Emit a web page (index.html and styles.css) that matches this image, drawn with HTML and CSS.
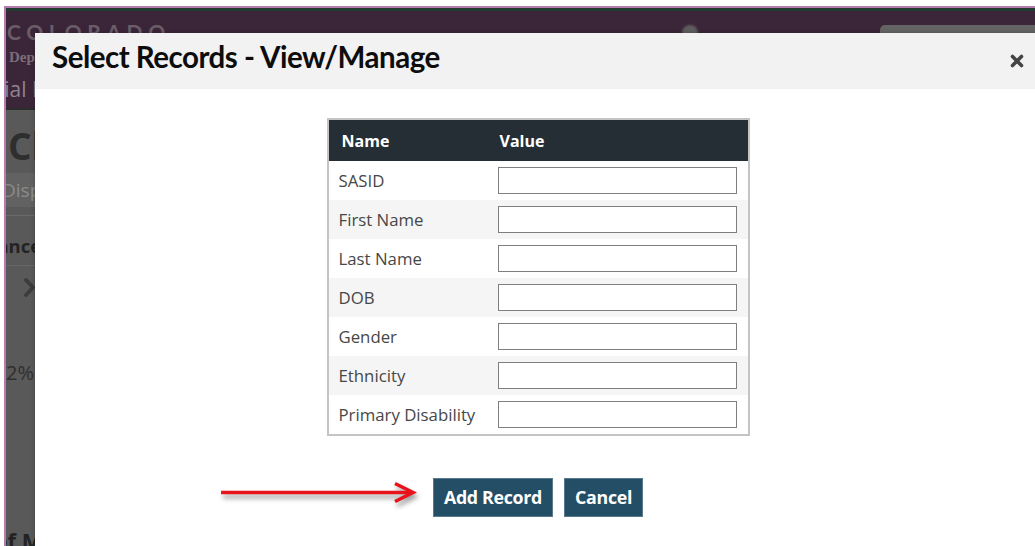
FILE: index.html
```html
<!DOCTYPE html>
<html lang="en">
<head>
<meta charset="utf-8">
<title>Select Records - View/Manage</title>
<link rel="stylesheet" href="styles.css">
</head>
<body>
<div class="frame">
  <header class="site-header">
    <div class="header-top">
      <div class="brand">
        <div class="brand-name">COLORADO</div>
        <div class="brand-dept">Department of Education</div>
      </div>
      <div class="header-tools">
        <span class="user-icon"></span>
        <span class="search-box"></span>
      </div>
    </div>
    <div class="app-title"><span class="app-title-text">Special Education</span></div>
  </header>
  <main class="content">
    <h1 class="page-title">Child Records</h1>
    <div class="tab-bar"><span class="tab">Display</span></div>
    <section class="summary">
      <h2 class="summary-title">Compliance</h2>
      <div class="summary-toggle">
        <svg width="13" height="21" viewBox="0 0 13 21"><path d="M3 3 L10 10.5 L3 18" fill="none" stroke="#3c3c3c" stroke-width="4" stroke-linecap="round" stroke-linejoin="round"/></svg>
      </div>
      <div class="summary-stat">2%</div>
    </section>
    <div class="summary-foot">of Measures</div>
  </main>
</div>

<div class="modal" role="dialog" aria-labelledby="modal-title">
  <div class="modal-header">
    <h3 class="modal-title" id="modal-title">Select Records - View/Manage</h3>
    <button class="modal-close" type="button" aria-label="Close">
      <svg width="14" height="14" viewBox="0 0 14 14"><path d="M2.5 2.5 L11.5 11.5 M11.5 2.5 L2.5 11.5" stroke="#444" stroke-width="3.6" stroke-linecap="round"/></svg>
    </button>
  </div>
  <div class="modal-body">
    <table class="record-table">
      <thead>
        <tr><th class="col-name">Name</th><th class="col-value">Value</th></tr>
      </thead>
      <tbody>
        <tr><td class="col-name">SASID</td><td class="col-value"><input class="field" type="text"></td></tr>
        <tr><td class="col-name">First Name</td><td class="col-value"><input class="field" type="text"></td></tr>
        <tr><td class="col-name">Last Name</td><td class="col-value"><input class="field" type="text"></td></tr>
        <tr><td class="col-name">DOB</td><td class="col-value"><input class="field" type="text"></td></tr>
        <tr><td class="col-name">Gender</td><td class="col-value"><input class="field" type="text"></td></tr>
        <tr><td class="col-name">Ethnicity</td><td class="col-value"><input class="field" type="text"></td></tr>
        <tr><td class="col-name">Primary Disability</td><td class="col-value"><input class="field" type="text"></td></tr>
      </tbody>
    </table>
    <div class="modal-actions">
      <div class="action-group">
        <svg class="pointer-arrow" width="200" height="30" viewBox="0 0 200 30">
          <path d="M4 12.5 L194 12.5" stroke="#e8131b" stroke-width="3.6" fill="none"/>
          <path d="M178 3.5 L196 12.5 L178 21.5" stroke="#e8131b" stroke-width="3.6" fill="none" stroke-linejoin="miter"/>
        </svg>
        <button class="btn" type="button">Add Record</button>
        <button class="btn" type="button">Cancel</button>
      </div>
    </div>
  </div>
</div>
</body>
</html>
```
FILE: styles.css
```css
* { box-sizing: border-box; }

html, body {
  margin: 0;
  height: 100%;
  overflow: hidden;
  background: #fff;
}

body {
  padding: 6px 0 0 4px;
  font-family: "Open Sans", "Liberation Sans", sans-serif;
  position: relative;
}

/* page behind the dialog (already dimmed) */
.frame {
  height: 100%;
  border-left: 2px solid #b77bae;
  border-top: 2px solid #b77bae;
  overflow: hidden;
  display: flex;
  flex-direction: column;
  background: #595959;
}

.site-header {
  border-top: 3px solid #1f3b32;
  background: #3b2639;
  height: 102px;
  flex: none;
  border-bottom: 2px solid #2c2c2c;
}

.header-top {
  display: flex;
  align-items: flex-start;
}

.brand { padding-left: 1px; }

.brand-name {
  font-family: "Lato", sans-serif;
  font-weight: 700;
  font-size: 21px;
  letter-spacing: 5.6px;
  color: #6a5d69;
  line-height: 24px;
  margin-top: 9px;
}

.brand-dept {
  font-family: "Liberation Serif", serif;
  font-weight: 700;
  font-size: 15px;
  color: #7c6d7a;
  line-height: 18px;
  margin-top: 4px;
  margin-left: 2px;
  white-space: nowrap;
}

.header-tools {
  margin-left: auto;
  margin-right: -12px;
  display: flex;
  align-items: flex-start;
  gap: 182px;
}

.user-icon {
  width: 16px;
  height: 16px;
  margin-top: 14px;
  border-radius: 50%;
  background: #5e5e5e;
  filter: blur(1px);
}

.search-box {
  width: 167px;
  height: 24px;
  margin-top: 14px;
  border-radius: 5px;
  background: #646464;
}

.app-title {
  margin-top: 9px;
  white-space: nowrap;
  overflow: hidden;
}

.app-title-text {
  display: inline-block;
  margin-left: -48px;
  font-size: 21px;
  line-height: 28px;
  color: #8f828d;
}

.content {
  flex: 1;
  color: #2e2e2e;
}

.page-title {
  margin: 14px 0 0 2px;
  font-size: 37px;
  line-height: 44px;
  font-weight: 700;
  color: #2e2e2e;
  white-space: nowrap;
}

.tab-bar {
  margin-top: 5px;
  height: 34px;
  background: #626262;
  display: flex;
  align-items: center;
}

.tab {
  margin-left: -4px;
  font-size: 19px;
  color: #8b8b8b;
}

.summary {
  margin-top: 8px;
  border-top: 1px solid #6a6a6a;
}

.summary-title {
  margin: 16px 0 0 -73px;
  font-size: 18.5px;
  line-height: 28px;
  font-weight: 700;
  color: #232323;
  white-space: nowrap;
  padding-bottom: 5px;
  border-bottom: 1px solid #676767;
}

.summary-toggle {
  margin: 11px 0 0 17px;
  height: 21px;
}

.summary-stat {
  margin-top: 62px;
  font-size: 20px;
  line-height: 26px;
  color: #2f2f2f;
}

.summary-foot {
  margin: 140px 0 0 -12px;
  font-size: 22px;
  line-height: 28px;
  font-weight: 700;
  color: #232323;
  white-space: nowrap;
}

/* dialog */
.modal {
  position: absolute;
  left: 35px;
  top: 33px;
  width: 1006px;
  height: 513px;
  background: #fff;
  box-shadow: 0 0 4px rgba(0, 0, 0, 0.25);
}

.modal-header {
  height: 56px;
  background: #f2f2f2;
  display: flex;
  align-items: flex-start;
  justify-content: space-between;
  padding: 6px 17px 0 17px;
}

.modal-title {
  margin: 0;
  font-family: "Lato", sans-serif;
  font-weight: 700;
  font-size: 29.5px;
  line-height: 36px;
  letter-spacing: -0.5px;
  color: #0d0d0d;
}

.modal-close {
  align-self: center;
  margin-top: -6px;
  border: 0;
  padding: 0;
  background: none;
  width: 14px;
  height: 14px;
  display: block;
}

.modal-close svg { display: block; }

.modal-body {
  padding-top: 29px;
}

.record-table {
  margin: 0 auto;
  width: 423px;
  border: 2px solid #c4c4c4;
  border-spacing: 0;
  border-collapse: separate;
  font-size: 16.8px;
}

.record-table th {
  background: #262e35;
  color: #fff;
  font-weight: 700;
  font-size: 16px;
  text-align: left;
  height: 41px;
  padding: 0 0 0 13px;
}

.record-table th.col-name { width: 159px; }
.record-table th.col-value { padding-left: 12px; }

.record-table td {
  height: 39px;
  padding: 0;
  color: #474747;
  vertical-align: middle;
}

.record-table td.col-name { padding-left: 10px; }
.record-table td.col-value { padding: 0 10px; }

.record-table tbody tr:nth-child(even) td { background: #f5f5f5; }

.field {
  display: block;
  width: 239px;
  height: 27px;
  border: 1px solid #7f7f7f;
  border-radius: 0;
  background: #fff;
  margin: 0;
  padding: 0 4px;
}

.modal-actions {
  display: flex;
  justify-content: center;
  margin-top: 42px;
}

.action-group {
  position: relative;
  display: flex;
  gap: 11px;
}

.pointer-arrow {
  position: absolute;
  right: calc(100% + 16px);
  top: 2px;
  filter: drop-shadow(2px 4px 2.5px rgba(0, 0, 0, 0.4));
}

.btn {
  height: 39px;
  padding: 0 10px;
  background: #234e66;
  border: 1px solid #5a7b8e;
  color: #fff;
  font-family: "Open Sans", sans-serif;
  font-weight: 700;
  font-size: 17.8px;
  line-height: 1;
  letter-spacing: -0.3px;
}
```
